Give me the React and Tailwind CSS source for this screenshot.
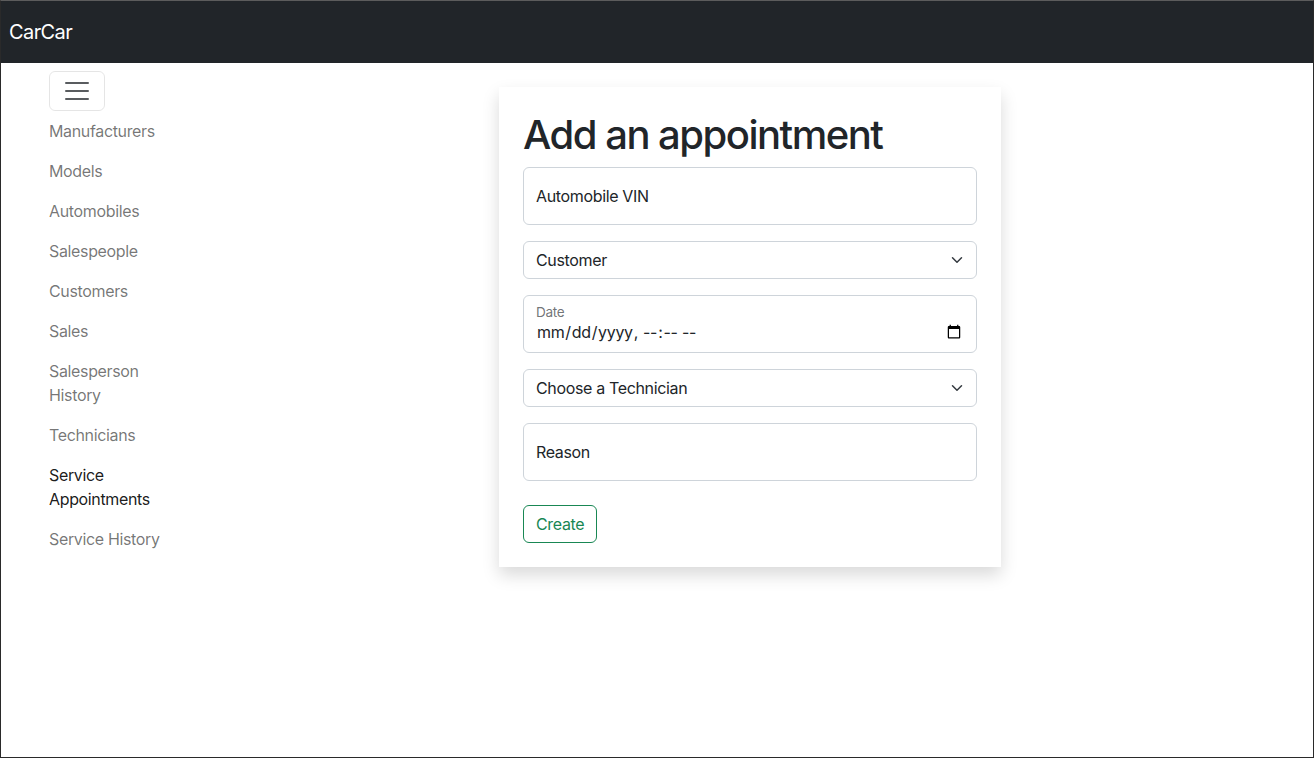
import { useState } from "react";

const LINKS = [
    "Manufacturers",
    "Models",
    "Automobiles",
    "Salespeople",
    "Customers",
    "Sales",
    "Salesperson History",
    "Technicians",
    "Service Appointments",
    "Service History",
];

const ACTIVE = "Service Appointments";

function Chevron() {
    return (
        <svg className="pointer-events-none absolute right-3 top-1/2 -translate-y-1/2" width="16" height="12" viewBox="0 0 16 16" fill="none">
            <path d="m2 5 6 6 6-6" stroke="#343a40" strokeWidth="2" strokeLinecap="round" strokeLinejoin="round" />
        </svg>
    );
}

export default function App() {
    const [form, setForm] = useState({ vin: "", customer: "", date: "", technician: "", reason: "" });
    const setField = (key, value) => setForm((prev) => ({ ...prev, [key]: value }));

    return (
        <div className="h-[758px] w-full overflow-hidden border border-[#2a2a2a] border-t-[#5c5c5c] bg-white font-['Inter',sans-serif] tracking-[-0.35px] text-[#212529]">
            <nav className="flex h-[62px] items-center bg-[#212529] px-2">
                <a href="#" className="text-[20px] leading-[30px] tracking-[-0.6px] text-white">CarCar</a>
            </nav>

            <div className="flex pl-[48px]">
                <aside className="w-[120px] shrink-0 pt-2">
                    <button type="button" className="flex h-10 w-14 items-center justify-center rounded-md border border-black/10">
                        <svg width="30" height="30" viewBox="0 0 30 30">
                            <path d="M4 7h22M4 15h22M4 23h22" stroke="rgba(33,37,41,0.75)" strokeWidth="2" strokeLinecap="round" strokeMiterlimit="10" />
                        </svg>
                    </button>
                    <ul className="flex flex-col">
                        {LINKS.map((link) => (
                            <li key={link}>
                                <a href="#" className={`block py-2 text-[16px] leading-6 ${link === ACTIVE ? "text-black/90" : "text-black/55"}`}>
                                    {link}
                                </a>
                            </li>
                        ))}
                    </ul>
                </aside>

                <main className="ml-[330px] mt-6">
                    <div className="w-[502px] bg-white p-6 shadow-[0_8px_16px_rgba(0,0,0,0.15)]">
                        <h1 className="mb-2 text-[40px] font-medium leading-[48px] tracking-[-1.5px]">Add an appointment</h1>
                        <form className="flex flex-col">
                            <input
                                className="mb-4 h-[58px] w-full rounded-md border border-[#ced4da] px-3 text-[16px] placeholder:text-[#212529] focus:outline-none"
                                placeholder="Automobile VIN"
                                value={form.vin}
                                onChange={(e) => setField("vin", e.target.value)}
                            />
                            <div className="relative mb-4">
                                <select
                                    className="h-[38px] w-full appearance-none rounded-md border border-[#ced4da] bg-white pl-3 pr-9 text-[16px] leading-6 focus:outline-none"
                                    value={form.customer}
                                    onChange={(e) => setField("customer", e.target.value)}
                                >
                                    <option value="">Customer</option>
                                </select>
                                <Chevron />
                            </div>
                            <div className="relative mb-4">
                                <input
                                    type="datetime-local"
                                    className="h-[58px] w-full rounded-md border border-[#ced4da] px-3 pb-[10px] pt-[26px] text-[16px] leading-5 text-[#212529] focus:outline-none"
                                    value={form.date}
                                    onChange={(e) => setField("date", e.target.value)}
                                />
                                <label className="pointer-events-none absolute left-[13px] top-[9px] text-[13.6px] leading-[17px] text-[rgba(33,37,41,0.65)]">Date</label>
                            </div>
                            <div className="relative mb-4">
                                <select
                                    className="h-[38px] w-full appearance-none rounded-md border border-[#ced4da] bg-white pl-3 pr-9 text-[16px] leading-6 focus:outline-none"
                                    value={form.technician}
                                    onChange={(e) => setField("technician", e.target.value)}
                                >
                                    <option value="">Choose a Technician</option>
                                </select>
                                <Chevron />
                            </div>
                            <input
                                className="mb-6 h-[58px] w-full rounded-md border border-[#ced4da] px-3 text-[16px] placeholder:text-[#212529] focus:outline-none"
                                placeholder="Reason"
                                value={form.reason}
                                onChange={(e) => setField("reason", e.target.value)}
                            />
                            <div>
                                <button type="button" className="h-[38px] rounded-md border border-[#198754] px-3 text-[16px] leading-6 text-[#198754] hover:bg-[#198754] hover:text-white">
                                    Create
                                </button>
                            </div>
                        </form>
                    </div>
                </main>
            </div>
        </div>
    );
}
